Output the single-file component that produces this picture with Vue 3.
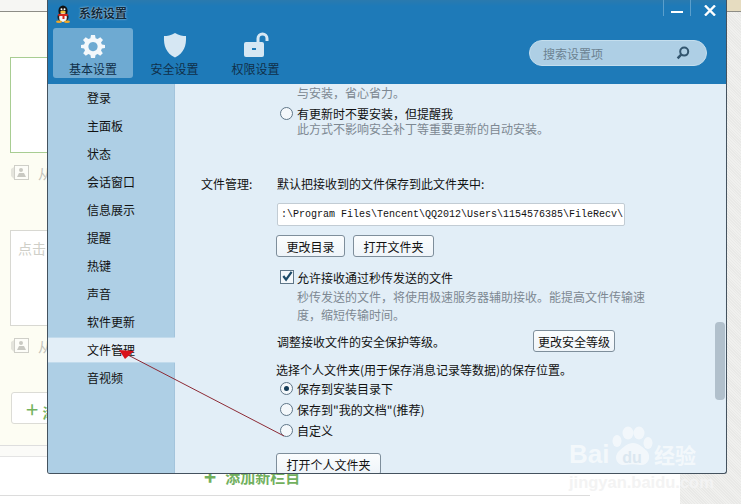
<script setup>
const menu = ['登录','主面板','状态','会话窗口','信息展示','提醒','热键','声音','软件更新','文件管理','音视频']
const tabs = [
  { label: '基本设置', icon: 'gear', active: true },
  { label: '安全设置', icon: 'shield' },
  { label: '权限设置', icon: 'lock' }
]
</script>

<template>
  <div class="desk">
    <div class="page">
      <div class="strip"></div>
      <div class="cream">
        <div class="note green"></div>
        <div class="from"><svg class="pic" width="20" height="18" viewBox="0 0 20 18"><path d="M1 5 L4 3 V15 L1 12Z" fill="#e4e4dc"/><rect x="4.5" y="1.5" width="14" height="14" fill="#fdfdf8" stroke="#cfcfc8"/><circle cx="11" cy="6" r="2" fill="#c9c9c2"/><path d="M7 13 L9 9 H14 L16 13Z" fill="#c9c9c2"/></svg><span>从</span></div>
        <div class="note grey"><span>点击</span></div>
        <div class="from"><svg class="pic" width="20" height="18" viewBox="0 0 20 18"><path d="M1 5 L4 3 V15 L1 12Z" fill="#e4e4dc"/><rect x="4.5" y="1.5" width="14" height="14" fill="#fdfdf8" stroke="#cfcfc8"/><circle cx="11" cy="6" r="2" fill="#c9c9c2"/><path d="M7 13 L9 9 H14 L16 13Z" fill="#c9c9c2"/></svg><span>从</span></div>
        <div class="add-small"><b>+</b> 添加</div>
      </div>
      <div class="band"></div>
      <div class="foot"><div class="add-new"><b>+</b><span>添加新栏目</span></div></div>
    </div>

    <section class="window">
      <header class="head">
        <div class="titlebar">
          <svg class="qq" width="16" height="18" viewBox="0 0 16 18">
            <ellipse cx="8" cy="6" rx="4.6" ry="5.6" fill="#111"/>
            <ellipse cx="8" cy="12" rx="5.6" ry="5" fill="#222"/>
            <ellipse cx="8" cy="12.5" rx="3.8" ry="4.4" fill="#f4f4f4"/>
            <ellipse cx="8" cy="7" rx="2.8" ry="1.5" fill="#f5c33c"/>
            <path d="M3 9 H13 L12.5 11 H9.5 V14 H7.5 V11 H3.5Z" fill="#d8281c"/>
            <ellipse cx="4" cy="16.8" rx="3" ry="1.2" fill="#f0a828"/>
            <ellipse cx="12" cy="16.8" rx="3" ry="1.2" fill="#f0a828"/>
            <circle cx="6.5" cy="4.2" r="1" fill="#fff"/><circle cx="9.5" cy="4.2" r="1" fill="#fff"/>
          </svg>
          <strong>系统设置</strong>
          <div class="controls">
            <span class="ctl"><i class="min"></i></span>
            <span class="ctl close"><svg width="12" height="11" viewBox="0 0 12 11"><path d="M1 0.5 L11 10.5 M11 0.5 L1 10.5" stroke="#fff" stroke-width="2.4"/></svg></span>
          </div>
        </div>
        <div class="toolbar">
          <div class="tabs">
            <div v-for="t in tabs" :key="t.label" class="tab" :class="{ on: t.active }">
              <svg v-if="t.icon==='gear'" width="24" height="24" viewBox="0 0 24 24">
                <path fill="#f4f8fb" fill-rule="evenodd" d="M10 1 H14 L14.6 4.2 L16.6 5 L19.3 3.2 L22 6 L20 8.6 L20.9 10.6 L24 11 V14 L20.9 14.6 L20 16.6 L21.8 19.3 L19.2 21.8 L16.6 20 L14.6 20.9 L14 24 H10 L9.4 20.9 L7.4 20 L4.8 21.8 L2.2 19.3 L4 16.6 L3.1 14.6 L0 14 V11 L3.1 10.6 L4 8.6 L2 6 L4.7 3.2 L7.4 5 L9.4 4.2Z M12 8 A4.6 4.6 0 1 0 12.01 8Z"/>
              </svg>
              <svg v-else-if="t.icon==='shield'" width="24" height="26" viewBox="0 0 24 26">
                <path fill="#d6e7f3" d="M12 1 C8 3.5 4 4 1 4 C0.5 14 3 21 12 25.5 C21 21 23.5 14 23 4 C20 4 16 3.5 12 1Z"/>
              </svg>
              <svg v-else width="26" height="26" viewBox="0 0 26 26">
                <path fill="none" stroke="#d6e7f3" stroke-width="3" d="M15 11 V6.5 A4.5 4.5 0 0 1 24 6.5 V9"/>
                <rect x="1" y="10" width="20" height="15" rx="2" fill="#d6e7f3"/>
                <rect x="9" y="16" width="4" height="2" fill="#1f7ab8"/>
              </svg>
              <span>{{ t.label }}</span>
            </div>
          </div>
          <div class="search">
            <span>搜索设置项</span>
            <svg width="14" height="14" viewBox="0 0 14 14"><circle cx="8.2" cy="5.6" r="4" fill="none" stroke="#33566f" stroke-width="2"/><path d="M5.2 8.6 L1.6 12.4" stroke="#33566f" stroke-width="2.4"/></svg>
          </div>
        </div>
      </header>

      <div class="body">
        <nav class="side">
          <div v-for="m in menu" :key="m" class="item" :class="{ cur: m==='文件管理' }">{{ m }}</div>
        </nav>
        <div class="content">
          <p class="hint first">与安装，省心省力。</p>
          <label class="radio-row r1"><i class="radio"></i>有更新时不要安装，但提醒我</label>
          <p class="hint second">此方式不影响安全补丁等重要更新的自动安装。</p>

          <div class="file-head"><span class="label">文件管理:</span><span>默认把接收到的文件保存到此文件夹中:</span></div>
          <div class="path">:\Program Files\Tencent\QQ2012\Users\1154576385\FileRecv\</div>
          <div class="btns">
            <button class="b-dir">更改目录</button>
            <button class="b-open">打开文件夹</button>
          </div>
          <label class="check-row"><i class="check"><svg width="13" height="13" viewBox="0 0 13 13"><path d="M2.5 6 L5.5 10 L11.5 1.5" fill="none" stroke="#1d4a68" stroke-width="2.4"/></svg></i>允许接收通过秒传发送的文件</label>
          <p class="hint long">秒传发送的文件，将使用极速服务器辅助接收。能提高文件传输速<br>度，缩短传输时间。</p>
          <div class="level"><span>调整接收文件的安全保护等级。</span><button>更改安全等级</button></div>
          <p class="choose">选择个人文件夹(用于保存消息记录等数据)的保存位置。</p>
          <label class="radio-row"><i class="radio sel"></i>保存到安装目录下</label>
          <label class="radio-row"><i class="radio"></i>保存到"我的文档"(推荐)</label>
          <label class="radio-row"><i class="radio"></i>自定义</label>
          <button class="b-personal">打开个人文件夹</button>
          <div class="scroll"></div>
        </div>
      </div>
    </section>

    <svg class="arrow" width="741" height="504" viewBox="0 0 741 504">
      <path d="M284 436 L128 355" stroke="#8c2a35" stroke-width="1" fill="none"/>
      <path d="M119 350 L134 351 L125 359Z" fill="#d8121c"/>
    </svg>

    <div class="mark">
      <svg class="paw" width="46" height="46" viewBox="0 0 46 46">
        <g fill="#fff" fill-opacity=".55">
          <ellipse cx="8" cy="16" rx="4.5" ry="6"/><ellipse cx="19" cy="8" rx="5.5" ry="6.5"/>
          <ellipse cx="30" cy="8" rx="5.5" ry="6.5"/><ellipse cx="39" cy="18" rx="4.5" ry="6"/>
          <path d="M24 18 C30 18 33 22 38 26 C43 32 39 41 31 40 C26 39 21 39 16 40 C8 41 4 32 10 26 C15 22 18 18 24 18Z"/>
        </g>
      </svg>
      <div class="mark-row"><b>Bai</b><i>du</i><span>经验</span></div>
      <div class="mark-url">jingyan.baidu.com</div>
    </div>
  </div>
</template>

<style scoped>
.desk {
  position: relative;
  width: 741px;
  height: 504px;
  overflow: hidden;
  font-family: "Noto Sans CJK SC", "Liberation Sans", sans-serif;
  font-size: 12px;
  color: #111;
  background: repeating-linear-gradient(45deg, #f0f0ee 0 1px, #e9e9e7 1px 2px);
}
.page { width: 680px; height: 504px; display: flex; flex-direction: column; }
.strip { height: 11px; width: 741px; flex: none; background: linear-gradient(90deg, #f6f6f3 0, #f6f6f3 90%, #e6dcc0 98%); border-bottom: 1px solid #8d8d86; }
.cream { height: 434px; flex: none; padding: 45px 0 0 10px; box-sizing: border-box; background: #fdfdf3; border-bottom: 1px solid #dedede; }
.note { width: 300px; height: 96px; box-sizing: border-box; background: #fff; }
.note.green { border: 1px solid #a8cd92; }
.note.grey { margin-top: 32px; border: 1px solid #d8d8d2; padding: 9px 7px; color: #cfcfc8; font-size: 14px; line-height: 16px; }
.from { display: flex; align-items: center; height: 18px; margin-top: 11px; gap: 8px; color: #c4c4bc; font-size: 14px; }
.from + .note.grey { margin-top: 48px; }
.add-small { margin-top: 37px; margin-left: 1px; width: 200px; height: 32px; box-sizing: border-box; background: #fff; border: 1px solid #dcdcd6; border-radius: 3px; padding: 0 0 0 14px; line-height: 30px; color: #74b35f; font-size: 14px; font-weight: 700; }
.add-small b { font-size: 22px; font-weight: 400; margin-right: 1px; }
.band { height: 10px; flex: none; background: #fbfbf8; border-bottom: 1px solid #e4e4e4; }
.foot { flex: 1; background: #fff; }
.add-new { width: 590px; height: 39px; box-sizing: border-box; border-bottom: 1px solid #dcdcdc; display: flex; align-items: flex-end; padding: 0 0 8px 204px; gap: 9px; color: #72b05e; font-size: 15px; font-weight: 700; line-height: 20px; }
.add-new b { font-size: 20px; }

.window {
  position: absolute;
  left: 47px;
  top: 0;
  width: 680px;
  height: 474px;
  box-sizing: border-box;
  border: 1px solid #44525e;
  border-top: 0;
  border-radius: 0 0 3px 3px;
  background: #e2eef7;
  overflow: hidden;
}
.head { height: 84px; background: linear-gradient(#2a7aaf 0, #1e7ab8 6px); }
.titlebar { height: 28px; display: flex; align-items: center; padding-left: 7px; }
.qq { margin-right: 8px; margin-top: -1px; }
.titlebar strong { font-size: 12px; font-weight: 700; color: #102a3c; text-shadow: 0 0 2px #dfeaf2; margin-top: -3px; }
.controls { margin-left: auto; display: flex; align-self: flex-start; }
.ctl { width: 27px; height: 16px; display: flex; align-items: center; justify-content: center; border-left: 1px solid #5b9fcc; box-sizing: border-box; padding-top: 4px; }
.ctl.close { width: 36px; padding-left: 2px; }
.min { display: block; width: 12px; height: 2px; background: #fff; margin-top: 4px; }
.toolbar { display: flex; align-items: flex-start; padding-left: 5px; }
.tabs { display: flex; }
.tab { width: 81px; height: 50px; display: flex; flex-direction: column; align-items: center; justify-content: flex-end; padding-bottom: 1px; box-sizing: border-box; border-radius: 3px; color: #10304a; line-height: 16px; gap: 3px; }
.tab.on { width: 80px; margin-right: 1px; background: #6eaad2; }
.search { margin-left: auto; margin-right: 19px; margin-top: 12px; width: 178px; height: 26px; box-sizing: border-box; padding: 0 16px 0 13px; display: flex; align-items: center; justify-content: space-between; border-radius: 13px; background: #aecfe5; border: 1px solid #c4deee; color: #6c8291; }
.body { display: flex; height: 389px; }
.side { width: 127px; flex: none; box-sizing: border-box; background: #aecfe5; border-right: 1px solid #a3c4dc; }
.item { height: 28px; line-height: 28px; padding-left: 39px; box-sizing: border-box; }
.item.cur { margin: 1px -1px 1px 0; line-height: 24px; background: #e2eef7; border-top: 1px solid #c2dbec; border-bottom: 1px solid #c2dbec; box-sizing: content-box; height: 24px; }
.content { position: relative; flex: 1; min-width: 0; overflow: hidden; padding-left: 101px; }
p { margin: 0; }
.hint { color: #7d8892; line-height: 16px; padding-left: 21px; white-space: nowrap; }
.hint.first { padding-top: 1px; }
.hint.second { margin-top: -2px; }
.radio-row { display: flex; align-items: center; height: 21px; padding-left: 4px; gap: 4px; }
.radio-row.r1 { margin-top: 2px; height: 20px; }
.radio { width: 11px; height: 11px; flex: none; border: 1px solid #5f7688; border-radius: 50%; background: #f4f8fb; position: relative; }
.radio.sel::after { content: ""; position: absolute; left: 3px; top: 3px; width: 5px; height: 5px; border-radius: 50%; background: #153c58; }
.file-head { margin: 39px 0 0 -75px; display: flex; line-height: 16px; }
.label { width: 76px; flex: none; }
.path { margin-top: 11px; margin-left: 1px; width: 348px; height: 23px; box-sizing: border-box; background: #fff; border: 1px solid #c2ccd4; border-radius: 2px; padding-left: 3px; font-family: "Liberation Mono", monospace; font-size: 10px; line-height: 21px; white-space: nowrap; overflow: hidden; }
button { font: inherit; color: #111; background: linear-gradient(#fbfdfe, #eef4f9); border: 1px solid #7e8e9b; border-radius: 3px; padding: 0; box-sizing: border-box; height: 22px; display: block; }
.btns { display: flex; gap: 8px; margin-top: 9px; }
.b-dir { width: 69px; }
.b-open { width: 81px; }
.check-row { display: flex; align-items: center; height: 16px; margin: 12px 0 0 4px; gap: 3px; }
.check { width: 12px; height: 12px; flex: none; border: 1px solid #5f7688; background: #f4f8fb; display: flex; }
.check svg { margin: -1px 0 0 0; }
.hint.long { line-height: 18px; margin-top: 3px; padding-left: 21px; }
.level { display: flex; align-items: center; justify-content: space-between; width: 339px; height: 22px; margin-top: 6px; padding-left: 1px; box-sizing: border-box; }
.level button { width: 82px; }
.choose { margin-top: 10px; line-height: 16px; }
.b-personal { margin-top: 12px; width: 105px; }
.scroll { position: absolute; right: 1px; top: 238px; width: 10px; height: 78px; border-radius: 4px; background: #b1c0cc; }

.arrow { position: absolute; left: 0; top: 0; pointer-events: none; }
.mark { position: absolute; left: 569px; top: 425px; width: 135px; height: 66px; color: #fff; }
.paw { position: absolute; left: 40px; top: 0; }
.mark-row { position: absolute; left: 0; top: 15px; width: 135px; height: 28px; display: flex; align-items: center; }
.mark-row b { font: 700 26px/28px "Liberation Sans", sans-serif; color: rgba(255,255,255,.6); width: 45px; }
.mark-row i { font: 700 16px/16px "Liberation Sans", sans-serif; color: #dbe7f0; width: 36px; text-align: center; margin-top: 8px; }
.mark-row span { font-size: 21px; font-weight: 700; color: rgba(255,255,255,.6); line-height: 28px; margin-left: 4px; white-space: nowrap; }
.mark-url { position: absolute; left: 0; top: 49px; font: 700 16.5px/16px "Liberation Sans", sans-serif; color: #f3f3f3; white-space: nowrap; }
</style>
